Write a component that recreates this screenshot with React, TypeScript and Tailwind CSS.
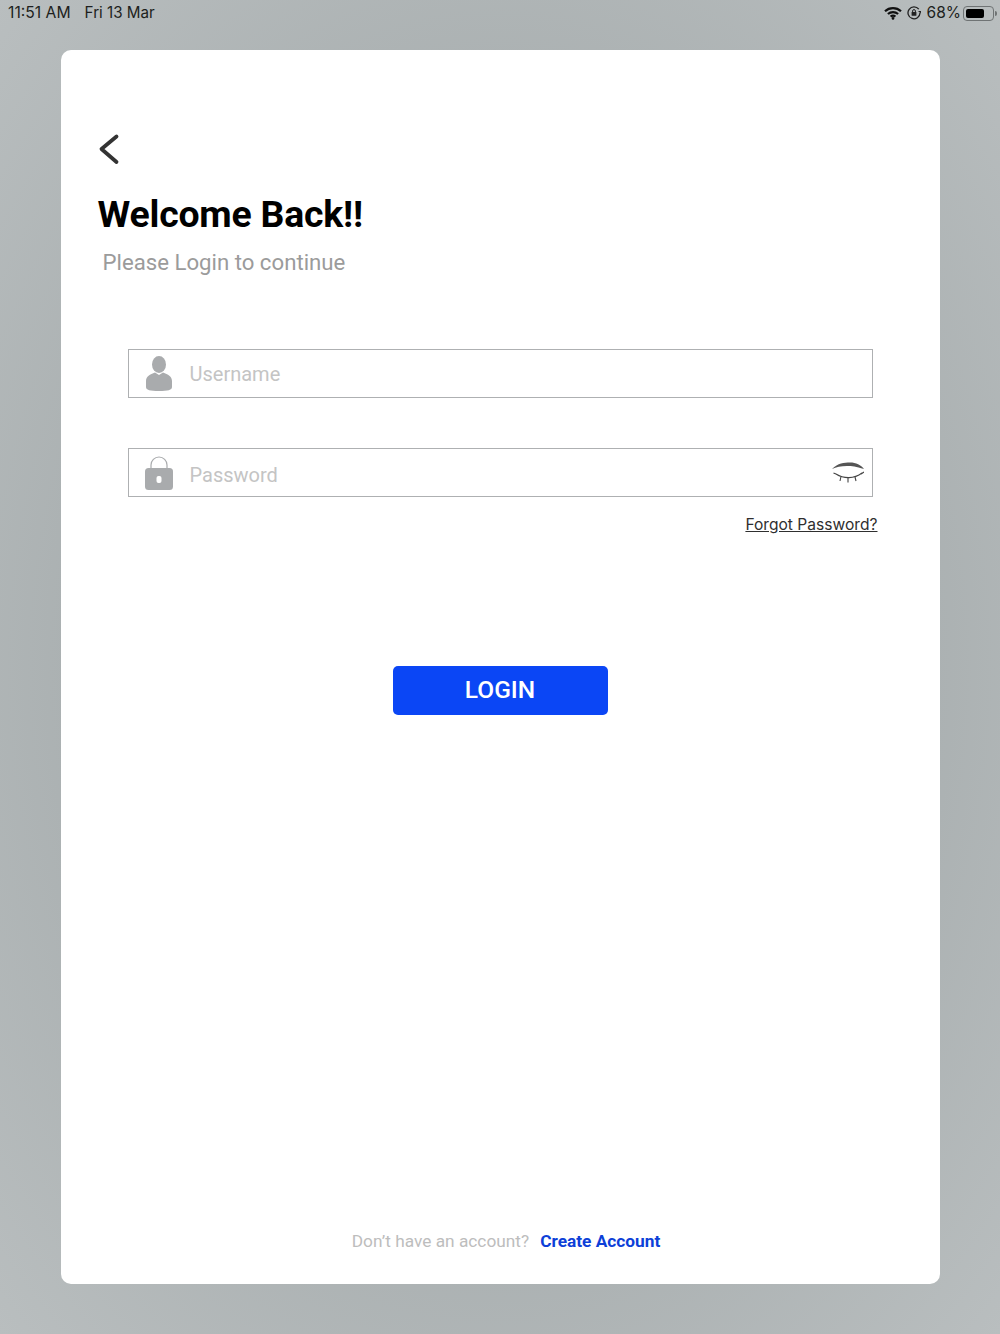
import React from "react";

const font = "font-['Roboto','Liberation_Sans',sans-serif]";

function Wifi() {
  return (
    <svg width="18" height="14" viewBox="0 0 18 14" fill="none" stroke="#111" strokeWidth="2.2">
      <path d="M1 5.2C5.5 1 12.5 1 17 5.2" />
      <path d="M3.9 8C6.8 5.4 11.2 5.4 14.1 8" />
      <path d="M6.6 10.6C8 9.5 10 9.5 11.4 10.6" />
      <circle cx="9" cy="12.4" r="1.3" fill="#111" stroke="none" />
    </svg>
  );
}

function RotationLock() {
  return (
    <svg width="14" height="14" viewBox="0 0 14 14" fill="none">
      <path d="M11.8 3.2A6 6 0 1 0 13 7" stroke="#222" strokeWidth="1.3" />
      <path d="M13.4 7.2L11 5h4.2z" fill="#222" />
      <rect x="4.6" y="6" width="4.8" height="3.8" rx="0.6" fill="#222" />
      <path d="M5.6 6V5a1.4 1.4 0 0 1 2.8 0v1" stroke="#222" strokeWidth="1" />
    </svg>
  );
}

function Battery() {
  return (
    <div className="-ml-[3px] flex items-center">
      <div className="h-[15px] w-[31px] rounded-[4px] border border-[#6f7374] p-[2px]">
        <div className="h-full w-[18px] rounded-[2px] bg-black" />
      </div>
      <div className="ml-[1px] h-[5px] w-[2px] rounded-r-sm bg-[#6f7374]" />
    </div>
  );
}

function UserIcon() {
  return (
    <svg width="26" height="35" viewBox="0 0 26 35" fill="#a9abad">
      <ellipse cx="13" cy="8.5" rx="7" ry="8.5" />
      <path d="M9 16.5L13 19l4-2.500c5 1.800 9 4 9 8.500v6c0 3-4 4-13 4S0 34 0 31v-6c0-4.500 4-6.700 9-8.500z" />
    </svg>
  );
}

function LockIcon() {
  return (
    <svg width="30" height="36" viewBox="0 0 30 36" fill="none">
      <path d="M7 15V10a8 8 0 0 1 16 0v5" stroke="#a9abad" strokeWidth="1.200" />
      <rect x="1" y="13" width="28" height="22" rx="3.500" fill="#a9abad" />
      <rect x="12.500" y="21" width="5" height="7" rx="2" fill="#fff" />
    </svg>
  );
}

function EyeIcon() {
  return (
    <svg width="32" height="24" viewBox="0 0 32 24" fill="none">
      <path d="M0 8C6 2 12 1.500 18 1.500C24 1.500 29 4 32 8C24 5.500 20 5 15 5C9 5 4 6 0 8z" fill="#555" />
      <path d="M4 13C12 18 22 18 30 12" stroke="#444" strokeWidth="1.100" />
      <path d="M4 13L1.500 12M9 15.500L8 20M16 17V21.500M23 16L24 20M29 13L32 11" stroke="#444" strokeWidth="1.100" />
    </svg>
  );
}

export default function App() {
  return (
    <div className={`${font} flex h-[1334px] w-[1000px] flex-col bg-[radial-gradient(ellipse_at_center,#a9afb0_55%,#b9bebf_100%)]`}>
      <div className="flex h-[50px] shrink-0 items-start justify-between pl-2 pr-[3px] pt-1 text-[15px] leading-[18px] text-[#1d1f20]">
        <div className="flex items-center gap-[14px] font-['Inter',sans-serif]">
          <span className="text-[15.700px]">11:51 AM</span>
          <span className="text-[15.200px]">Fri 13 Mar</span>
        </div>
        <div className="flex items-center gap-[5px] font-['Inter',sans-serif]">
          <Wifi />
          <RotationLock />
          <span className="ml-[1px] text-[15.500px]">68%</span>
          <Battery />
        </div>
      </div>

      <div className="mx-auto flex h-[1234px] w-[879px] flex-col rounded-[10px] bg-white pl-[37px] pr-[67px]">
        <svg className="mt-[83px] shrink-0" width="22" height="34" viewBox="0 0 22 34" fill="none">
          <path d="M18.500 3.500L3.500 16L18.500 29" stroke="#333" strokeWidth="3.800" strokeLinecap="round" strokeLinejoin="round" />
        </svg>
        <h1 className="mt-[25px] text-[37.400px] font-bold leading-[44px] tracking-[-0.2px] text-black">Welcome Back!!</h1>
        <p className="ml-[5px] mt-[11px] text-[22.200px] leading-[30px] text-[#9b9b9b]">Please Login to continue</p>

        <div className="ml-[30px] mt-[72px] flex h-[49px] items-center border border-[#aeb0b2] pl-[17px]">
          <UserIcon />
          <span className="ml-[18px] text-[20px] text-[#c4c4c4]">Username</span>
        </div>
        <div className="ml-[30px] mt-[50px] flex h-[49px] items-center justify-between border border-[#aeb0b2] pl-[15px] pr-[8px]">
          <div className="flex items-center">
            <LockIcon />
            <span className="ml-[16px] mt-[4px] text-[20px] text-[#c4c4c4]">Password</span>
          </div>
          <EyeIcon />
        </div>
        <div className="-mr-[5px] mt-[18px] flex justify-end">
          <a className="font-['Inter',sans-serif] text-[15.600px] leading-[20px] text-[#2f2f2f] underline">Forgot Password?</a>
        </div>

        <button className="ml-[295px] mt-[131px] flex h-[49px] w-[215px] items-center justify-center rounded-[5px] bg-[#0b46f5] text-[24.500px] font-medium text-white">
          LOGIN
        </button>

        <div className="mb-[31px] mt-auto flex justify-center gap-[11px] pl-[42px] text-[17.300px] leading-[24px]">
          <span className="text-[#bdbdbd]">Don’t have an account?</span>
          <a className="font-bold text-[#0d3fd8]">Create Account</a>
        </div>
      </div>
    </div>
  );
}
